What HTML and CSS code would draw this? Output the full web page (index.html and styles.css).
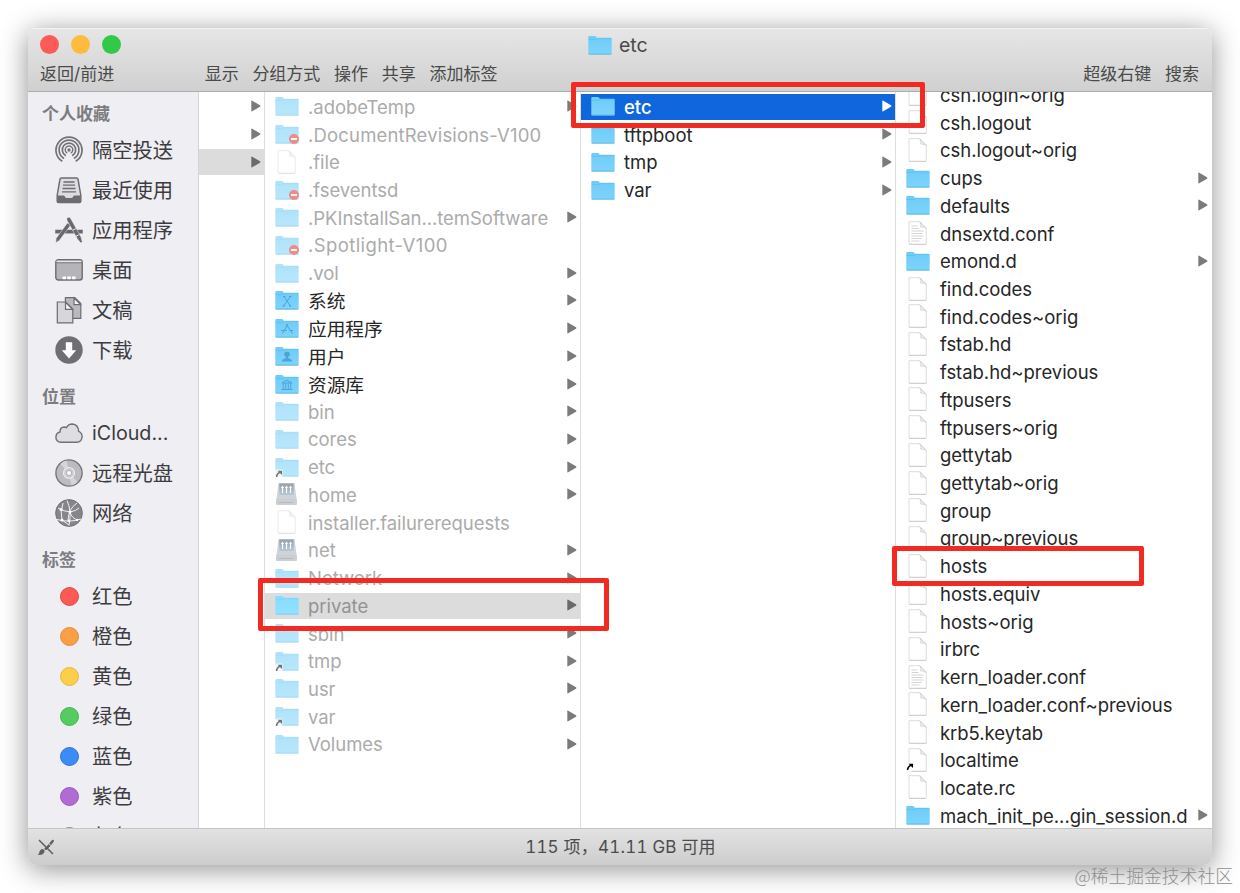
FILE: index.html
```html
<!DOCTYPE html>
<html lang="zh-CN">
<head>
  <meta charset="UTF-8">
  <title>etc</title>
  <link rel="stylesheet" href="styles.css">
</head>
<body>
  <!-- icons -->
  <svg class="defs" width="0" height="0">
    <defs>
      <linearGradient id="blue" x1="0" y1="0" x2="0" y2="1">
        <stop offset="0" stop-color="#6ecbf7"/>
        <stop offset="1" stop-color="#7dd4fb"/>
      </linearGradient>
      <linearGradient id="disk" x1="0" y1="0" x2="0" y2="1">
        <stop offset="0" stop-color="#3f5468"/>
        <stop offset="1" stop-color="#7f9ab3"/>
      </linearGradient>
    </defs>
    <symbol id="folder" viewBox="0 0 24 24">
      <path d="M.3 4.300q0-1.300 1.200-1.300h5.400q.8 0 1.300.8l.6.9h13.700q1.200 0 1.200 1.100v14.700q0 1-1 1H1.300q-1 0-1-1z" fill="url(#blue)"/>
      <path d="M.5 6.500h7.800l1-.9h14.200" fill="none" stroke="#5bbcec" stroke-width=".6"/>
      <path d="M.7 21.100h22.600" stroke="#56aedb" stroke-width=".8"/>
    </symbol>
    <symbol id="file" viewBox="0 0 24 24">
      <path d="M3 .7h11l6.300 6.500v15.300q0 .8-.8.8H3.800q-.8 0-.8-.8z" fill="#fff" stroke="#dcdcdc" stroke-width="1"/>
      <path d="M3 23.400h17.300" stroke="#c4c4c4" stroke-width=".7"/>
      <path d="M13.800.8q1.600 2.200.9 5.200 3.400-.2 5.500 1.400z" fill="#f0f0f0" stroke="#cfcfcf" stroke-width=".8"/>
    </symbol>
    <symbol id="text" viewBox="0 0 24 24">
      <use href="#file"/>
      <path d="M5.500 5h6M5.500 7.500h7M5.500 10h12M5.500 12.500h11M5.500 15h12M5.500 17.500h10M5.500 20h8" stroke="#cfcfcf" stroke-width=".9"/>
    </symbol>
    <symbol id="denied" viewBox="0 0 24 24">
      <use href="#folder"/>
      <circle cx="19" cy="17" r="5" fill="#e0302a"/>
      <path d="M16 17h6" stroke="#fff" stroke-width="1.800"/>
    </symbol>
    <symbol id="alias" viewBox="0 0 24 24">
      <path d="M0 24v-7.500l1-2h6.500v7l-3 2.500z" fill="#fff" opacity=".75"/>
      <path d="M1.500 22q.2-3.200 3.500-4.800" fill="none" stroke="#000" stroke-width="1.500"/>
      <path d="M2.600 15.700h4.400v4.400z" fill="#000"/>
    </symbol>
    <symbol id="server" viewBox="0 0 24 24">
      <path d="M3.500 1h16l2 16H1.500z" fill="#a9b1ba"/>
      <path d="M4.300 1.500h14.400v11.500H4.300z" fill="url(#disk)"/>
      <path d="M7.500 11V5M11.500 11V5M15.500 11V5" stroke="#fff" stroke-width="1.200"/>
      <path d="M6 6l1.500-2.500L9 6zM10 6l1.500-2.500L13 6zM14 6l1.500-2.500L17 6z" fill="#fff"/>
      <rect x="1" y="16.500" width="21" height="6.500" rx="1" fill="#a4abb3"/>
      <path d="M3.500 20.500h15" stroke="#7f868d" stroke-width="1.200"/>
    </symbol>
    <symbol id="arrow" viewBox="0 0 10 12">
      <path d="M.3 1.200Q.3.200 1.200.7L9 5.300q.9.700 0 1.400L1.200 11.300q-.9.500-.9-.5z" fill="currentColor"/>
    </symbol>
  </svg>

  <div class="window">
    <header>
      <div class="titlebar">
        <div class="lights">
          <span class="close"></span>
          <span class="minimize"></span>
          <span class="zoom"></span>
        </div>
        <div class="title">
          <svg class="icon"><use href="#folder"/></svg>
          <span>etc</span>
        </div>
      </div>
      <div class="toolbar">
        <span class="nav">返回/前进</span>
        <span>显示</span>
        <span>分组方式</span>
        <span>操作</span>
        <span>共享</span>
        <span>添加标签</span>
        <span class="right">超级右键</span>
        <span>搜索</span>
      </div>
    </header>

    <main>
      <aside>
        <h2>个人收藏</h2>
        <ul>
          <li>
            <svg viewBox="0 0 28 28" fill="none" stroke="#727277" stroke-width="1.700">
              <path d="M7.300 25.300a13 13 0 1 1 13.400 0"/>
              <path d="M9 22.500a9.900 9.900 0 1 1 10 0"/>
              <path d="M10.800 19.700a6.700 6.700 0 1 1 6.400 0"/>
              <path d="M12.300 17.200a3.800 3.800 0 1 1 3.400 0" stroke-width="1.400"/>
              <circle cx="14" cy="14" r="1.700" fill="#727277" stroke="none"/>
            </svg>
            <span>隔空投送</span>
          </li>
          <li>
            <svg viewBox="0 0 28 28">
              <path d="M6.400 2h15.200q1.200 0 1.400 1.200l2.800 16v6q0 1.300-1.300 1.300h-21q-1.300 0-1.300-1.300v-6l2.800-16Q5.200 2 6.400 2z" fill="#dcdce1" stroke="#6c6c71" stroke-width="1.500"/>
              <path d="M2.500 19.500h6q1 0 1.300 1 .5 1.500 2 1.500h4.400q1.500 0 2-1.500.3-1 1.300-1h6v5.700q0 1-1 1h-21q-1 0-1-1z" fill="#6c6c71"/>
              <path d="M8.500 6h11M8 9.200h12M7.500 12.500h13M7 15.800h14" stroke="#6c6c71" stroke-width="1.300"/>
            </svg>
            <span>最近使用</span>
          </li>
          <li>
            <svg viewBox="0 0 28 28" fill="#68686d" stroke="#efeef3" stroke-width=".5">
              <path d="M0 13.500h28v4.200H0z"/>
              <path d="M8.500 12.600L14 3.500l5 9z" fill="#efeef3"/>
              <path d="M12.400 7l3.600 1.800L4.500 24.200.8 26.800l.4-4.600z"/>
              <path d="M12 4.300q-.8-2 .8-2.900 1.800-.8 2.700.9L26 21l1.200 4.800q-.4 1.600-1.800.6L22.400 23z"/>
              <path d="M17.800 14.200l3-1.600M20.800 20.400l3-1.600" stroke-width="1"/>
            </svg>
            <span>应用程序</span>
          </li>
          <li>
            <svg viewBox="0 0 28 28">
              <rect x=".8" y="3.700" width="26.400" height="20.300" rx="2.500" fill="#b4b4b9" stroke="#6c6c71" stroke-width="1.400"/>
              <path d="M1.500 5.400h25" stroke="#e8e8ec" stroke-width="1.400"/>
              <path d="M1 6.800h26" stroke="#7b7b80" stroke-width="1"/>
              <path d="M7.500 21.800h3.500M12.300 21.800h3.500M17.100 21.800h3.500" stroke="#fff" stroke-width="2.800"/>
            </svg>
            <span>桌面</span>
          </li>
          <li>
            <svg viewBox="0 0 28 28" stroke="#6c6c71" stroke-width="1.200">
              <path d="M10.400 1.600h9.400l6 6v14.800H10.400z" fill="#b9b9be"/>
              <path d="M19 2v6.600h6.500z" fill="#f8f8fa"/>
              <path d="M2.300 6h8.500l7 7v13.900H2.300z" fill="#d6d6db"/>
              <path d="M10.500 6.300v7h7z" fill="#f8f8fa"/>
            </svg>
            <span>文稿</span>
          </li>
          <li>
            <svg viewBox="0 0 28 28">
              <circle cx="14" cy="14" r="13.700" fill="#6e6e73"/>
              <path d="M10.800 6.200h6.400v8h4L14 22.400l-7.200-8.200h4z" fill="#fff"/>
            </svg>
            <span>下载</span>
          </li>
        </ul>
        <h2>位置</h2>
        <ul>
          <li>
            <svg viewBox="0 0 28 28">
              <path d="M6 23.300Q1 23 .9 18.300 1 14 5 13q0-4.700 4.200-5 1.300 0 2.200.7Q13.400 5 17.300 5q6 .5 6.300 7.300 3.600 1.500 3.500 5.500-.4 5.300-5.400 5.500z" fill="#dddde2" stroke="#717176" stroke-width="1.400"/>
            </svg>
            <span class="latin">iCloud...</span>
          </li>
          <li>
            <svg viewBox="0 0 28 28">
              <circle cx="14" cy="14" r="13.100" fill="#bcbcc0" stroke="#76767a" stroke-width="1.400"/>
              <path d="M14 14L5.500 5q3-3 6-3.400zM14 14l8.500 9q-3 3-6 3.400z" fill="#d6d6da"/>
              <circle cx="14" cy="14" r="5.500" fill="#cdcdd1" stroke="#ededf0" stroke-width="1.200"/>
              <circle cx="14" cy="14" r="2.500" fill="#fff" stroke="#a0a0a5" stroke-width=".8"/>
            </svg>
            <span>远程光盘</span>
          </li>
          <li>
            <svg viewBox="0 0 28 28">
              <circle cx="14" cy="14" r="13.400" fill="#85858a" stroke="#68686d" stroke-width=".8"/>
              <path d="M3 9q4 3 12 4 6-1 9-4M2 20.500q12 3.500 24-.5M8 4q-3 9-1 17l7 5M12 1.500q5 10 2 25M22 4Q13 10 13 22M15 13q2 7 8 8" fill="none" stroke="#f2f2f4" stroke-width="1"/>
              <g fill="#fff"><circle cx="6" cy="10.500" r="1.500"/><circle cx="15" cy="13" r="1.500"/><circle cx="7" cy="21" r="1.500"/><circle cx="14" cy="22" r="1.400"/><circle cx="22" cy="21" r="1.200"/></g>
            </svg>
            <span>网络</span>
          </li>
        </ul>
        <h2>标签</h2>
        <ul>
          <li><i class="tag red"></i><span>红色</span></li>
          <li><i class="tag orange"></i><span>橙色</span></li>
          <li><i class="tag yellow"></i><span>黄色</span></li>
          <li><i class="tag green"></i><span>绿色</span></li>
          <li><i class="tag blue"></i><span>蓝色</span></li>
          <li><i class="tag purple"></i><span>紫色</span></li>
          <li><i class="tag gray"></i><span>灰色</span></li>
        </ul>
      </aside>

      <div class="column parent">
        <div class="row"><svg class="arrow"><use href="#arrow"/></svg></div>
        <div class="row"><svg class="arrow"><use href="#arrow"/></svg></div>
        <div class="row current"><svg class="arrow"><use href="#arrow"/></svg></div>
      </div>

      <div class="column root">
        <div class="row dim"><svg class="icon"><use href="#folder"/></svg><span>.adobeTemp</span><svg class="arrow"><use href="#arrow"/></svg></div>
        <div class="row dim"><svg class="icon"><use href="#denied"/></svg><span class="wide">.DocumentRevisions-V100</span></div>
        <div class="row dim"><svg class="icon"><use href="#file"/></svg><span>.file</span></div>
        <div class="row dim"><svg class="icon"><use href="#denied"/></svg><span>.fseventsd</span></div>
        <div class="row dim"><svg class="icon"><use href="#folder"/></svg><span>.PKInstallSan...temSoftware</span><svg class="arrow"><use href="#arrow"/></svg></div>
        <div class="row dim"><svg class="icon"><use href="#denied"/></svg><span class="wider">.Spotlight-V100</span></div>
        <div class="row dim"><svg class="icon"><use href="#folder"/></svg><span>.vol</span><svg class="arrow"><use href="#arrow"/></svg></div>
        <div class="row cjk">
          <svg class="icon" viewBox="0 0 24 24"><use href="#folder"/><path d="M9 8.500l6.500 9.500M15.500 8.500L8.500 18M8 8.500h2.500M14 8.500h2.500M7.500 18H10M14 18h2.500" stroke="#4ba4d6" fill="none"/></svg>
          <span>系统</span><svg class="arrow"><use href="#arrow"/></svg>
        </div>
        <div class="row cjk">
          <svg class="icon" viewBox="0 0 24 24"><use href="#folder"/><path d="M13 8l-5.500 9.500M11 8l6.500 9.500M6 14.500h5.500M14.500 14.500H18" stroke="#4ba4d6" fill="none"/></svg>
          <span>应用程序</span><svg class="arrow"><use href="#arrow"/></svg>
        </div>
        <div class="row cjk">
          <svg class="icon" viewBox="0 0 24 24"><use href="#folder"/><path d="M12 8a2.300 2.300 0 0 1 1.200 4.500v1.700q4 1 4 3.300H6.800q0-2.300 4-3.300v-1.700A2.300 2.300 0 0 1 12 8z" fill="#4ba4d6"/></svg>
          <span>用户</span><svg class="arrow"><use href="#arrow"/></svg>
        </div>
        <div class="row cjk">
          <svg class="icon" viewBox="0 0 24 24"><use href="#folder"/><path d="M7 11l5-2.800 5 2.800zM8.200 11v6M10.700 11v6M13.300 11v6M15.800 11v6M6.500 17.500h11" stroke="#4ba4d6" fill="none"/></svg>
          <span>资源库</span><svg class="arrow"><use href="#arrow"/></svg>
        </div>
        <div class="row dim"><svg class="icon"><use href="#folder"/></svg><span>bin</span><svg class="arrow"><use href="#arrow"/></svg></div>
        <div class="row dim"><svg class="icon"><use href="#folder"/></svg><span>cores</span><svg class="arrow"><use href="#arrow"/></svg></div>
        <div class="row dim"><svg class="icon"><use href="#folder"/><use href="#alias"/></svg><span>etc</span><svg class="arrow"><use href="#arrow"/></svg></div>
        <div class="row dim"><svg class="icon"><use href="#server"/></svg><span>home</span><svg class="arrow"><use href="#arrow"/></svg></div>
        <div class="row dim"><svg class="icon"><use href="#file"/></svg><span>installer.failurerequests</span></div>
        <div class="row dim"><svg class="icon"><use href="#server"/></svg><span>net</span><svg class="arrow"><use href="#arrow"/></svg></div>
        <div class="row dim"><svg class="icon"><use href="#folder"/></svg><span>Network</span><svg class="arrow"><use href="#arrow"/></svg></div>
        <div class="row dim current"><svg class="icon"><use href="#folder"/></svg><span>private</span><svg class="arrow"><use href="#arrow"/></svg></div>
        <div class="row dim"><svg class="icon"><use href="#folder"/></svg><span>sbin</span><svg class="arrow"><use href="#arrow"/></svg></div>
        <div class="row dim"><svg class="icon"><use href="#folder"/><use href="#alias"/></svg><span>tmp</span><svg class="arrow"><use href="#arrow"/></svg></div>
        <div class="row dim"><svg class="icon"><use href="#folder"/></svg><span>usr</span><svg class="arrow"><use href="#arrow"/></svg></div>
        <div class="row dim"><svg class="icon"><use href="#folder"/><use href="#alias"/></svg><span>var</span><svg class="arrow"><use href="#arrow"/></svg></div>
        <div class="row dim"><svg class="icon"><use href="#folder"/></svg><span>Volumes</span><svg class="arrow"><use href="#arrow"/></svg></div>
      </div>

      <div class="column private">
        <div class="row selected"><svg class="icon"><use href="#folder"/></svg><span>etc</span><svg class="arrow"><use href="#arrow"/></svg></div>
        <div class="row"><svg class="icon"><use href="#folder"/></svg><span>tftpboot</span><svg class="arrow"><use href="#arrow"/></svg></div>
        <div class="row"><svg class="icon"><use href="#folder"/></svg><span>tmp</span><svg class="arrow"><use href="#arrow"/></svg></div>
        <div class="row"><svg class="icon"><use href="#folder"/></svg><span>var</span><svg class="arrow"><use href="#arrow"/></svg></div>
      </div>

      <div class="column etc">
        <div class="scrolled">
          <div class="row"><svg class="icon"><use href="#file"/></svg><span>csh.login~orig</span></div>
          <div class="row"><svg class="icon"><use href="#file"/></svg><span>csh.logout</span></div>
          <div class="row"><svg class="icon"><use href="#file"/></svg><span>csh.logout~orig</span></div>
          <div class="row"><svg class="icon"><use href="#folder"/></svg><span>cups</span><svg class="arrow"><use href="#arrow"/></svg></div>
          <div class="row"><svg class="icon"><use href="#folder"/></svg><span>defaults</span><svg class="arrow"><use href="#arrow"/></svg></div>
          <div class="row"><svg class="icon"><use href="#text"/></svg><span>dnsextd.conf</span></div>
          <div class="row"><svg class="icon"><use href="#folder"/></svg><span>emond.d</span><svg class="arrow"><use href="#arrow"/></svg></div>
          <div class="row"><svg class="icon"><use href="#file"/></svg><span>find.codes</span></div>
          <div class="row"><svg class="icon"><use href="#file"/></svg><span>find.codes~orig</span></div>
          <div class="row"><svg class="icon"><use href="#file"/></svg><span>fstab.hd</span></div>
          <div class="row"><svg class="icon"><use href="#file"/></svg><span>fstab.hd~previous</span></div>
          <div class="row"><svg class="icon"><use href="#file"/></svg><span>ftpusers</span></div>
          <div class="row"><svg class="icon"><use href="#file"/></svg><span>ftpusers~orig</span></div>
          <div class="row"><svg class="icon"><use href="#file"/></svg><span>gettytab</span></div>
          <div class="row"><svg class="icon"><use href="#file"/></svg><span>gettytab~orig</span></div>
          <div class="row"><svg class="icon"><use href="#file"/></svg><span>group</span></div>
          <div class="row"><svg class="icon"><use href="#file"/></svg><span>group~previous</span></div>
          <div class="row"><svg class="icon"><use href="#file"/></svg><span>hosts</span></div>
          <div class="row"><svg class="icon"><use href="#file"/></svg><span>hosts.equiv</span></div>
          <div class="row"><svg class="icon"><use href="#file"/></svg><span>hosts~orig</span></div>
          <div class="row"><svg class="icon"><use href="#file"/></svg><span>irbrc</span></div>
          <div class="row"><svg class="icon"><use href="#text"/></svg><span>kern_loader.conf</span></div>
          <div class="row"><svg class="icon"><use href="#file"/></svg><span>kern_loader.conf~previous</span></div>
          <div class="row"><svg class="icon"><use href="#file"/></svg><span>krb5.keytab</span></div>
          <div class="row"><svg class="icon"><use href="#file"/><use href="#alias"/></svg><span>localtime</span></div>
          <div class="row"><svg class="icon"><use href="#file"/></svg><span>locate.rc</span></div>
          <div class="row"><svg class="icon"><use href="#folder"/></svg><span>mach_init_pe...gin_session.d</span><svg class="arrow"><use href="#arrow"/></svg></div>
        </div>
      </div>
    </main>

    <footer>
      <svg viewBox="0 0 16 16">
        <path d="M.3 15.700q1.200-1 1.500-2.700.4-2 2-2.600 1.900-.2 2.400 1.300.2 2.400-2.100 3.400-1.700.7-3.800.6zM6.600 9.700l4.300-4.200 1.300 1.300L8 10.900zM11.700 4.300l2.500-3q1.600-.7 1.300 1L13 5.700z" fill="#5e5e5e" stroke="#5e5e5e" stroke-width=".8"/>
        <path d="M1 1l14 14" stroke="#5e5e5e" stroke-width="1.500"/>
      </svg>
      <span>115 项，41.11 GB 可用</span>
    </footer>
  </div>

  <!-- highlights -->
  <div class="mark mark-etc"></div>
  <div class="mark mark-private"></div>
  <div class="mark mark-hosts"></div>
  <div class="watermark">@稀土掘金技术社区</div>
</body>
</html>
```
FILE: styles.css
```css
* {
  padding: 0;
  margin: 0;
  box-sizing: border-box;
}

body {
  width: 1240px;
  height: 893px;
  padding: 28px;
  position: relative;
  overflow: hidden;
  background-color: white;
  font-family: Inter, "Noto Sans CJK SC", sans-serif;
}

.defs {
  position: absolute;
}

.window {
  width: 1184px;
  height: 837px;
  display: flex;
  flex-direction: column;
  border-radius: 8px;
  overflow: hidden;
  box-shadow: 0 4px 28px rgba(0, 0, 0, 0.44);
}

header {
  height: 64px;
  background: linear-gradient(#e6e6e6, #d0d0d0);
  border-top: 1px solid #f3f3f3;
  border-bottom: 1px solid #adadad;
  color: #4a4a4a;
}

.titlebar {
  height: 32px;
  display: grid;
  grid-template-columns: 560px 1fr;
  align-items: center;
}

.lights {
  display: flex;
  gap: 12px;
  padding-left: 12px;
  margin-bottom: 1px;
}

.lights span {
  width: 19px;
  height: 19px;
  border-radius: 50%;
}

.lights .close {
  background-color: #fc5b57;
}

.lights .minimize {
  background-color: #fdbc40;
}

.lights .zoom {
  background-color: #34c84a;
}

.title {
  display: flex;
  align-items: center;
  gap: 7px;
  font-size: 19.5px;
}

.toolbar {
  display: flex;
  gap: 13.7px;
  padding: 0 13px 0 12px;
  line-height: 27px;
  font-size: 17px;
}

.toolbar .nav {
  width: 151px;
}

.toolbar .right {
  margin-left: auto;
}

main {
  height: 736px;
  display: grid;
  grid-template-columns: 171px 66px 316px 315px 1fr;
  background-color: white;
}

aside {
  background-color: #efeef3;
  border-right: 1px solid #d4d4d8;
  height: 736px;
  overflow: hidden;
}

aside h2 {
  margin-top: 11px;
  padding-left: 14px;
  font-size: 17px;
  line-height: 32px;
  font-weight: 600;
  color: #7c7c80;
}

aside h2:first-child {
  margin-top: 6px;
}

aside ul {
  list-style: none;
}

aside li {
  height: 40px;
  display: flex;
  align-items: center;
  gap: 9px;
  padding-left: 27px;
  font-size: 20.3px;
  color: #3c3c40;
}

aside li svg {
  width: 28px;
  height: 28px;
  margin-bottom: 1px;
}

aside li span {
  padding-bottom: 2px;
}

aside li .latin {
  font-size: 19.7px;
  padding-bottom: 0;
}

.tag {
  width: 19px;
  height: 19px;
  margin: 0 4px 0 5px;
  border-radius: 50%;
  border: 1px solid;
}

.red { background-color: #fb5a57; border-color: #e14845; }
.orange { background-color: #f9a047; border-color: #e48c33; }
.yellow { background-color: #fbce4c; border-color: #e5b93a; }
.green { background-color: #56cb62; border-color: #3fb64c; }
.blue { background-color: #3c8bf6; border-color: #2477e5; }
.purple { background-color: #b06cd2; border-color: #9b57be; }
.gray { background-color: #a4a4a8; border-color: #8d8d91; }

.column {
  height: 736px;
  padding-top: 1px;
  overflow: hidden;
  border-right: 1px solid #dedede;
}

.column.etc {
  border-right: none;
}

.scrolled {
  margin-top: -11.9px;
}

.row {
  height: 27.72px;
  display: flex;
  align-items: center;
  gap: 9px;
  padding: 0 4px 0 10px;
  border-top: 1px solid transparent;
  border-bottom: 1px solid transparent;
  background-clip: padding-box;
  font-size: 18.5px;
  letter-spacing: -0.04px;
  color: #262626;
  white-space: nowrap;
}

.row .wide {
  letter-spacing: 0.17px;
}

.row .wider {
  letter-spacing: 0.4px;
}

.row.cjk {
  font-size: 18.7px;
}

.row.cjk span {
  padding-bottom: 2px;
}

.icon {
  width: 24px;
  height: 24px;
  margin-bottom: 1px;
  flex: none;
}

.root .icon,
.private .icon {
  margin-left: -0.5px;
  margin-right: 0.5px;
}

.etc .icon {
  margin-right: 1px;
}

.arrow {
  width: 10px;
  height: 12px;
  margin-left: auto;
  margin-bottom: 1px;
  flex: none;
  color: #7b7b7b;
}

.root .arrow,
.parent .arrow,
.private .arrow {
  margin-right: -1px;
}

.row.dim {
  color: #ababab;
}

.row.dim .icon {
  opacity: 0.55;
}

.row.current {
  background-color: #dcdcdc;
}

.row.dim.current {
  color: #939393;
}

/* keep the folder light on the gray row */
.row.dim.current .icon {
  filter: contrast(0.55) brightness(1.28) saturate(1.3);
  opacity: 1;
}

.row.current .arrow {
  color: #6a6a6a;
}

.row.selected {
  background-color: #1067dd;
  color: white;
}

.row.selected span {
  font-weight: 500;
}

.row.selected .arrow {
  color: white;
}

footer {
  height: 37px;
  display: grid;
  grid-template-columns: 16px 1fr;
  align-items: center;
  padding: 0 25px 0 10px;
  border-top: 1px solid #c4c4c4;
  background: linear-gradient(#e2e2e2, #cdcdcd);
  font-size: 17px;
  font-variant-numeric: tabular-nums;
  letter-spacing: 0.2px;
  color: #4c4c4c;
  text-align: center;
}

footer span {
  padding-bottom: 3px;
}

footer svg {
  width: 16px;
  height: 16px;
}

.mark {
  position: absolute;
  border: 5px solid #f12b21;
  border-radius: 2px;
}

.mark-etc {
  left: 571px;
  top: 82px;
  width: 354px;
  height: 46px;
}

.mark-private {
  left: 258px;
  top: 578px;
  width: 351px;
  height: 53px;
}

.mark-hosts {
  left: 892px;
  top: 546px;
  width: 252px;
  height: 40px;
}

.watermark {
  position: absolute;
  right: 7px;
  bottom: 4px;
  font-family: "Noto Sans CJK SC", sans-serif;
  font-weight: 300;
  font-size: 17.8px;
  line-height: 28px;
  color: #8f8f8f;
}
```
